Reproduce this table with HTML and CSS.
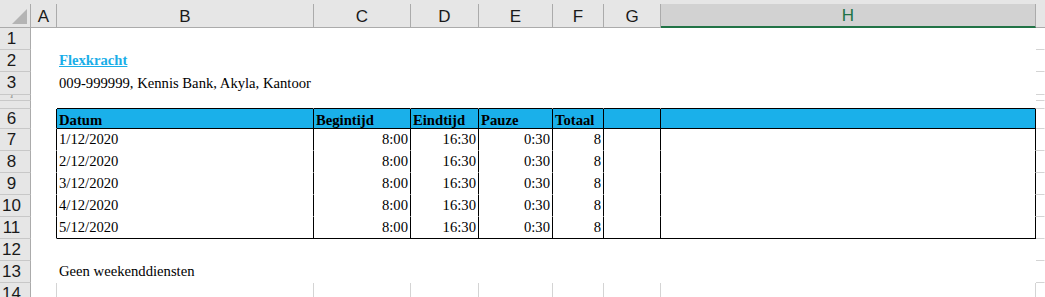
FILE: index.html
```html
<!DOCTYPE html>
<html>
<head>
<meta charset="utf-8">
<link rel="stylesheet" href="styles.css">
</head>
<body>
<div class="sheet">
  <div class="colhead">
    <div class="row hrow">
      <div class="ch corner"><svg width="15" height="15" viewBox="0 0 15 15"><polygon points="15,0 15,15 0,15" fill="#b4b4b4"/></svg></div>
      <div class="ch">A</div>
      <div class="ch">B</div>
      <div class="ch">C</div>
      <div class="ch">D</div>
      <div class="ch">E</div>
      <div class="ch">F</div>
      <div class="ch">G</div>
      <div class="ch sel">H</div>
      <div class="ch last"></div>
    </div>
  </div>

  <div class="row h22">
    <div class="rh">1</div>
    <div class="c"></div><div class="c"></div><div class="c"></div><div class="c"></div><div class="c"></div><div class="c"></div><div class="c"></div><div class="c"></div><div class="c gi"></div>
  </div>
  <div class="row h22">
    <div class="rh">2</div>
    <div class="c"></div><div class="c"><span class="link">Flexkracht</span></div><div class="c"></div><div class="c"></div><div class="c"></div><div class="c"></div><div class="c"></div><div class="c"></div><div class="c gi"></div>
  </div>
  <div class="row h23">
    <div class="rh">3</div>
    <div class="c"></div><div class="c">009-999999, Kennis Bank, Akyla, Kantoor</div><div class="c"></div><div class="c"></div><div class="c"></div><div class="c"></div><div class="c"></div><div class="c"></div><div class="c gi"></div>
  </div>
  <div class="row h6">
    <div class="rh tiny"><span class="clip">4</span></div>
    <div class="c"></div><div class="c"></div><div class="c"></div><div class="c"></div><div class="c"></div><div class="c"></div><div class="c"></div><div class="c"></div><div class="c gi"></div>
  </div>
  <div class="row h8">
    <div class="rh tiny"><span class="clip hide">5</span></div>
    <div class="c"></div><div class="c bb"></div><div class="c bb"></div><div class="c bb"></div><div class="c bb"></div><div class="c bb"></div><div class="c bb"></div><div class="c bb"></div><div class="c gi"></div>
  </div>
  <div class="row h20">
    <div class="rh">6</div>
    <div class="c br"></div>
    <div class="c hd br bb">Datum</div>
    <div class="c hd br bb">Begintijd</div>
    <div class="c hd br bb">Eindtijd</div>
    <div class="c hd br bb">Pauze</div>
    <div class="c hd br bb">Totaal</div>
    <div class="c hd br bb"></div>
    <div class="c hd br bb"></div>
    <div class="c gi"></div>
  </div>
  <div class="row h22">
    <div class="rh">7</div>
    <div class="c br"></div>
    <div class="c br">1/12/2020</div>
    <div class="c br num">8:00</div>
    <div class="c br num">16:30</div>
    <div class="c br num">0:30</div>
    <div class="c br num">8</div>
    <div class="c br"></div>
    <div class="c br"></div>
    <div class="c gi"></div>
  </div>
  <div class="row h22">
    <div class="rh">8</div>
    <div class="c br"></div>
    <div class="c br">2/12/2020</div>
    <div class="c br num">8:00</div>
    <div class="c br num">16:30</div>
    <div class="c br num">0:30</div>
    <div class="c br num">8</div>
    <div class="c br"></div>
    <div class="c br"></div>
    <div class="c gi"></div>
  </div>
  <div class="row h22">
    <div class="rh">9</div>
    <div class="c br"></div>
    <div class="c br">3/12/2020</div>
    <div class="c br num">8:00</div>
    <div class="c br num">16:30</div>
    <div class="c br num">0:30</div>
    <div class="c br num">8</div>
    <div class="c br"></div>
    <div class="c br"></div>
    <div class="c gi"></div>
  </div>
  <div class="row h22">
    <div class="rh">10</div>
    <div class="c br"></div>
    <div class="c br">4/12/2020</div>
    <div class="c br num">8:00</div>
    <div class="c br num">16:30</div>
    <div class="c br num">0:30</div>
    <div class="c br num">8</div>
    <div class="c br"></div>
    <div class="c br"></div>
    <div class="c gi"></div>
  </div>
  <div class="row h22">
    <div class="rh">11</div>
    <div class="c br"></div>
    <div class="c br bb">5/12/2020</div>
    <div class="c br bb num">8:00</div>
    <div class="c br bb num">16:30</div>
    <div class="c br bb num">0:30</div>
    <div class="c br bb num">8</div>
    <div class="c br bb"></div>
    <div class="c br bb"></div>
    <div class="c gi"></div>
  </div>
  <div class="row h22">
    <div class="rh">12</div>
    <div class="c"></div><div class="c"></div><div class="c"></div><div class="c"></div><div class="c"></div><div class="c"></div><div class="c"></div><div class="c"></div><div class="c gi"></div>
  </div>
  <div class="row h22">
    <div class="rh">13</div>
    <div class="c"></div><div class="c">Geen weekenddiensten</div><div class="c"></div><div class="c"></div><div class="c"></div><div class="c"></div><div class="c"></div><div class="c"></div><div class="c gi"></div>
  </div>
  <div class="row h22">
    <div class="rh">14</div>
    <div class="c gv"></div><div class="c gv"></div><div class="c gv"></div><div class="c gv"></div><div class="c gv"></div><div class="c gv"></div><div class="c gv"></div><div class="c gv"></div><div class="c gi"></div>
  </div>
</div>
</body>
</html>
```

FILE: styles.css
```css
html, body {
  margin: 0;
  padding: 0;
  background: #ffffff;
  overflow: hidden;
}

.sheet {
  width: 1045px;
  display: flex;
  flex-direction: column;
}

.row {
  display: grid;
  grid-template-columns: 31px 26px 257px 97px 68px 74px 51px 57px 375px 1fr;
}

.h22 { height: 22px; }
.h23 { height: 23px; }
.h20 { height: 20px; }
.h8 { height: 8px; }
.h6 { height: 6px; }

/* column header band */
.colhead {
  background: #e6e6e6;
  padding-top: 4px;
}

.hrow { height: 24px; }

.ch {
  box-sizing: border-box;
  border-right: 1px solid #ababab;
  border-bottom: 1px solid #ababab;
  background: #e6e6e6;
  display: flex;
  align-items: center;
  justify-content: center;
  font-family: "Liberation Sans", Arial, sans-serif;
  font-size: 17px;
  color: #1a1a1a;
  padding-top: 2px;
}

.ch.corner {
  justify-content: flex-end;
  align-items: flex-end;
  padding: 0 3px 3px 0;
}

.ch.corner svg { display: block; }

.ch.sel {
  background: #d2d2d2;
  color: #217346;
  border-bottom: 2px solid #217346;
}

.ch.last {
  border-right: none;
}

/* row headers */
.rh {
  box-sizing: border-box;
  background: #e6e6e6;
  border-right: 1px solid #ababab;
  border-bottom: 1px solid #c8c8c8;
  display: flex;
  align-items: center;
  justify-content: center;
  padding-right: 7px;
  font-family: "Liberation Sans", Arial, sans-serif;
  font-size: 17px;
  color: #1a1a1a;
  overflow: hidden;
}

.rh.tiny {
  align-items: flex-start;
}

.clip {
  display: block;
  font-size: 4px;
  line-height: 4px;
  height: 4px;
  margin-top: 0;
  color: #555555;
}

.clip.hide {
  color: transparent;
}

/* cells */
.c {
  box-sizing: border-box;
  border-right: 1px solid transparent;
  border-bottom: 1px solid transparent;
  display: flex;
  align-items: center;
  padding: 0 2px;
  overflow: hidden;
  white-space: nowrap;
  font-family: "Liberation Serif", "Times New Roman", serif;
  font-size: 14.67px;
  color: #000000;
}

.c.num { justify-content: flex-end; }

.c.br { border-right-color: #000000; }
.c.bb { border-bottom-color: #000000; }

.c.gi { border-bottom-color: #d4d4d4; }
.c.gv { border-right-color: #d4d4d4; }

.c.hd {
  background: #1ab0ea;
  font-weight: bold;
  padding-top: 3px;
}

.link {
  color: #1aaee8;
  font-weight: bold;
  text-decoration: underline;
}
```
